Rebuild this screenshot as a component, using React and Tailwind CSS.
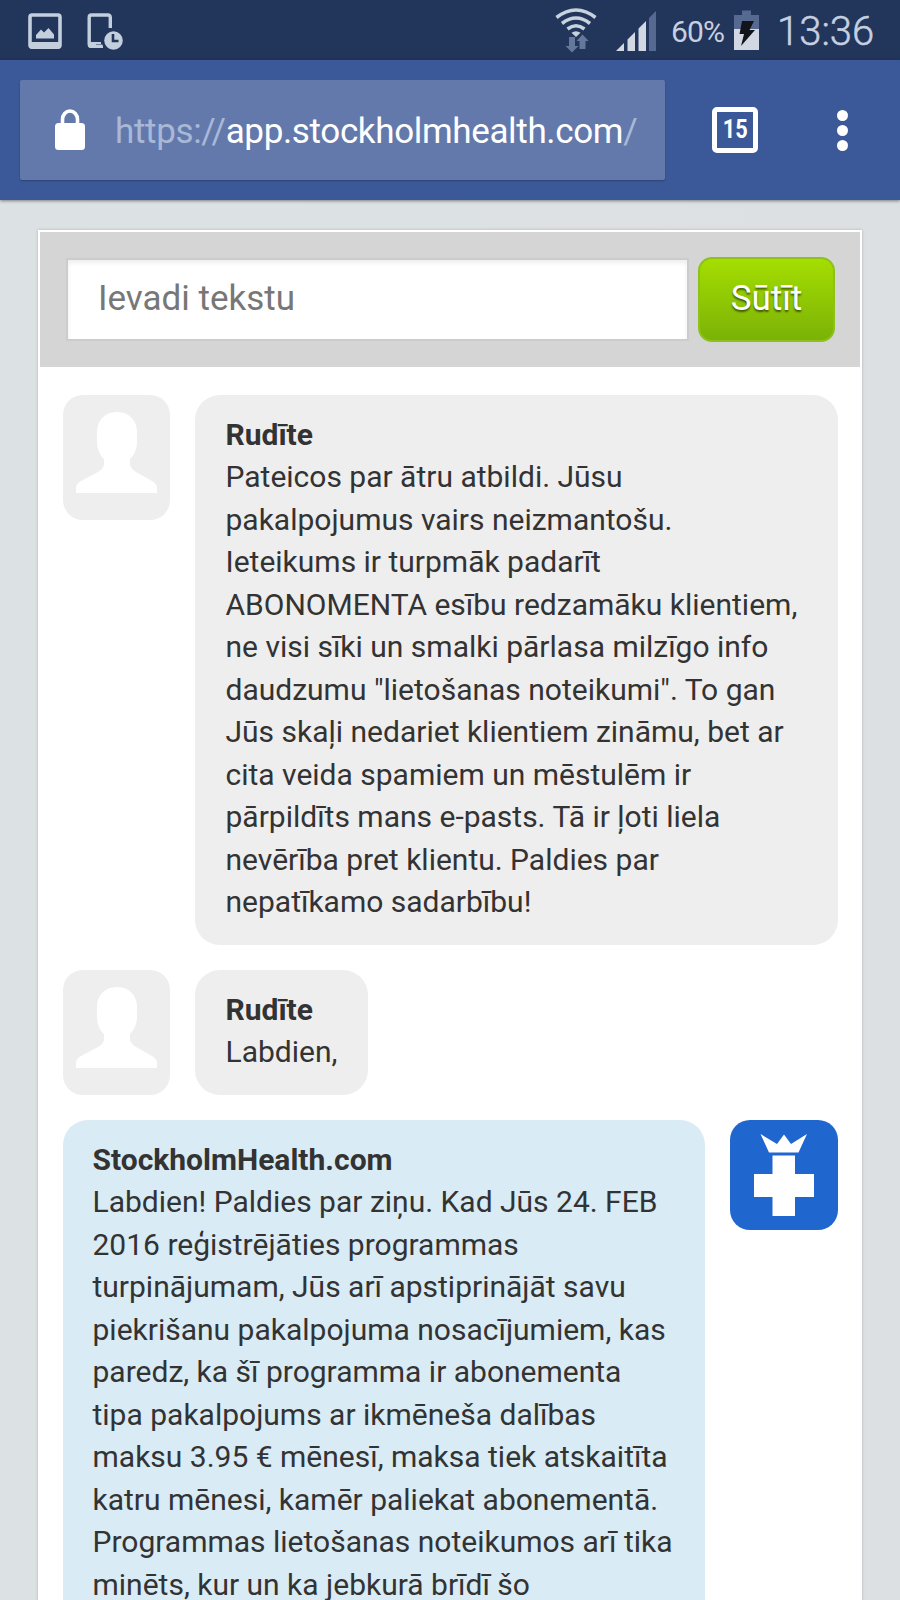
const firstMessage = [
  'Pateicos par ātru atbildi. Jūsu',
  'pakalpojumus vairs neizmantošu.',
  'Ieteikums ir turpmāk padarīt',
  'ABONOMENTA esību redzamāku klientiem,',
  'ne visi sīki un smalki pārlasa milzīgo info',
  'daudzumu "lietošanas noteikumi". To gan',
  'Jūs skaļi nedariet klientiem zināmu, bet ar',
  'cita veida spamiem un mēstulēm ir',
  'pārpildīts mans e-pasts. Tā ir ļoti liela',
  'nevērība pret klientu. Paldies par',
  'nepatīkamo sadarbību!',
];

const replyMessage = [
  'Labdien! Paldies par ziņu. Kad Jūs 24. FEB',
  '2016 reģistrējāties programmas',
  'turpinājumam, Jūs arī apstiprinājāt savu',
  'piekrišanu pakalpojuma nosacījumiem, kas',
  'paredz, ka šī programma ir abonementa',
  'tipa pakalpojums ar ikmēneša dalības',
  'maksu 3.95 € mēnesī, maksa tiek atskaitīta',
  'katru mēnesi, kamēr paliekat abonementā.',
  'Programmas lietošanas noteikumos arī tika',
  'minēts, kur un ka jebkurā brīdī šo',
];

function StatusBar() {
  return (
    <div className="flex h-[60px] shrink-0 items-center bg-[#22355b] text-[#c6d0e0]">
      <svg className="ml-7 h-[60px] w-[35px]" viewBox="28 0 35 60">
        <rect x="30" y="15" width="30" height="32" rx="2" fill="none" stroke="#c3cfdd" strokeWidth="3.6" />
        <path d="M29 42H61V46Q61 49 58 49H32Q29 49 29 46Z" fill="#c3cfdd" />
        <path d="M36 38.500V35L41 29.500L44 32.500L48.500 28L54 34.500V38.500Z" fill="#c3cfdd" />
      </svg>
      <svg className="ml-[23px] h-[60px] w-[40px]" viewBox="86 0 40 60">
        <path d="M110.300 28V17.500Q110.300 15 108 15H91.500Q89.200 15 89.200 17.500V44Q89.200 46.300 91.500 46.300H102.500" fill="none" stroke="#c3cfdd" strokeWidth="3.400" />
        <path d="M89 42H101V44H96V45.500H103V48H91Q88 48 88 45Z" fill="#c3cfdd" />
        <circle cx="113.500" cy="40.500" r="9.300" fill="#c3cfdd" />
        <path d="M113 34V41H118.500" fill="none" stroke="#22355b" strokeWidth="2.600" />
      </svg>

      <svg className="ml-auto h-[60px] w-[44px]" viewBox="554 0 44 60">
        <g fill="none" stroke="#c6d2de" strokeWidth="3.600">
          <path d="M556.500 17.500Q576 2.500 595.500 17.500" />
          <path d="M562 23.500Q576 12.500 590 23.500" />
          <path d="M567.500 29Q576 22.500 584.500 29" />
        </g>
        <path d="M571.500 32.800Q576 29.800 580.500 32.800L576 37Z" fill="#c6d2de" />
        <path d="M569 37H575V46H578.500L572 52.500L565.500 46H569Z" fill="#64789b" />
        <path d="M579.500 49H585.500V41H588.700L582.500 34.500L576.500 41H579.500Z" fill="#64789b" />
      </svg>
      <svg className="ml-[17px] h-[60px] w-[42px]" viewBox="615 0 42 60">
        <path d="M616 51L624 43V51Z M627.500 51V39.500L635 32V51Z M638.500 51V28.500L646 21V51Z" fill="#d2d7e4" />
        <path d="M649 51V18L656 11V51Z" fill="#566a91" />
      </svg>
      <span className="ml-[14px] w-[62px] pt-1 text-[30px] leading-[60px] tracking-[-0.8px] whitespace-nowrap">60%</span>
      <svg className="h-[60px] w-[26px]" viewBox="733 0 26 60">
        <path d="M742 10.500H751V15H759V30H734V15H742Z" fill="#566a91" />
        <path d="M734 29H759V50H734Z" fill="#d2d7e4" />
        <path d="M742 21H754L749.500 30H755L741 46L744 34H739.500Z" fill="#111419" />
      </svg>
      <span className="ml-[18px] w-[123px] pt-1 text-[40px] leading-[60px] font-light whitespace-nowrap [-webkit-text-stroke:0.5px_#c6d0e0]">13:36</span>
    </div>
  );
}

function BrowserBar() {
  return (
    <div className="relative flex h-[140px] shrink-0 items-center bg-[#3b5998] pl-5 text-white shadow-[0_1px_3px_rgba(0,0,0,0.45)]">
      <div className="flex h-[100px] w-[645px] items-center rounded-[2px] bg-[#6379ac] shadow-[0_1px_2px_rgba(0,0,0,0.25)]">
        <svg className="ml-[35px] h-[42px] w-[30px] shrink-0" viewBox="0 0 30 42">
          <path d="M7.500 16V10.500A7.500 8.500 0 0 1 22.500 10.500V16" fill="none" stroke="#fff" strokeWidth="3.600" />
          <rect y="14" width="30" height="27" rx="3.500" fill="#fff" />
        </svg>
        <span className="ml-[30px] pt-1 text-[35px] tracking-[-0.35px] whitespace-nowrap">
          <span className="text-[#a9b8d7]">https://</span>app.stockholmhealth.com<span className="text-[#a9b8d7]">/</span>
        </span>
      </div>
      <div className="ml-[47px] flex h-[46px] w-[46px] items-center justify-center rounded-[5px] border-[5px] border-white text-[25px] font-bold">
        <span className="scale-x-[0.87]">15</span>
      </div>
      <div className="ml-[79px] flex flex-col gap-[4px]">
        <i className="size-[11px] rounded-full bg-white" />
        <i className="size-[11px] rounded-full bg-white" />
        <i className="size-[11px] rounded-full bg-white" />
      </div>
    </div>
  );
}

function UserAvatar() {
  return (
    <div className="h-[125px] w-[107px] shrink-0 rounded-[20px] bg-[#eee]">
      <svg className="h-[125px] w-[107px]" viewBox="0 0 107 125">
        <path d="M54 17C67 17 74 26 74 37V46C74 55 71 60 67 64V70Q68 74 73 77L89 86Q94 89 94 93V98H13V93Q13 89 18 86L35 77Q40 74 41 70V64C37 60 34 55 34 46V37C34 26 41 17 54 17Z" fill="#fff" />
      </svg>
    </div>
  );
}

function BrandAvatar() {
  return (
    <div className="h-[110px] w-[108px] shrink-0 rounded-[20px] bg-[#2066cf]">
      <svg className="h-[110px] w-[107px]" viewBox="0 0 107 110">
        <path d="M30.500 14L47 24L54 14.500L61 24L77 14L68.500 32.500H39Z" fill="#fff" />
        <path d="M42.500 35.500H65V54H84V77H65V96H42.500V77H24V54H42.500Z" fill="#fff" />
      </svg>
    </div>
  );
}

function Bubble({ name, lines, className }) {
  return (
    <div className={`rounded-[25px] pt-[18.5px] pb-[21.5px] text-[30px] leading-[42.5px] text-[#333] ${className}`}>
      <div className="font-bold">{name}</div>
      {lines.map((line) => (
        <div key={line} className="whitespace-nowrap">{line}</div>
      ))}
    </div>
  );
}

export default function App() {
  return (
    <div className="flex h-[1600px] w-[900px] flex-col overflow-hidden bg-linear-to-r from-[#dce2e3] to-[#dce0e3] font-[Roboto,sans-serif]">
      <StatusBar />
      <BrowserBar />
      <main className="mx-[38px] mt-[30px] w-[824px] flex-1 border-2 border-white bg-white shadow-[0_0_3px_rgba(0,0,0,0.2)]">
        <div className="flex h-[135px] items-center bg-[#d5d5d5] pl-[26px]">
          <div className="flex h-[83px] w-[623px] items-center border-2 border-[#ccc] bg-white pl-[30px] text-[35px] text-[#777] shadow-[inset_0_3px_4px_rgba(0,0,0,0.07)]">
            Ievadi tekstu
          </div>
          <button className="ml-[9px] h-[85px] w-[137px] rounded-[14px] border-2 border-[#8cc21a] bg-linear-to-b from-[#a5de00] to-[#7bb207] text-[35px] text-white [text-shadow:0_2px_2px_rgba(0,0,0,0.55)]">
            Sūtīt
          </button>
        </div>
        <div className="flex flex-col gap-[25px] pt-7 pr-[22px] pl-[22.5px]">
          <div className="flex items-start gap-[25px]">
            <UserAvatar />
            <Bubble name="Rudīte" lines={firstMessage} className="w-[643px] bg-[#eee] pl-[31px]" />
          </div>
          <div className="flex items-start gap-[25px]">
            <UserAvatar />
            <Bubble name="Rudīte" lines={['Labdien,']} className="w-[173px] bg-[#eee] pl-[31px]" />
          </div>
          <div className="flex h-[480px] items-start gap-[25px]">
            <Bubble name="StockholmHealth.com" lines={replyMessage} className="h-[540px] w-[642px] bg-[#d9ebf5] pl-[30px]" />
            <BrandAvatar />
          </div>
        </div>
      </main>
    </div>
  );
}
